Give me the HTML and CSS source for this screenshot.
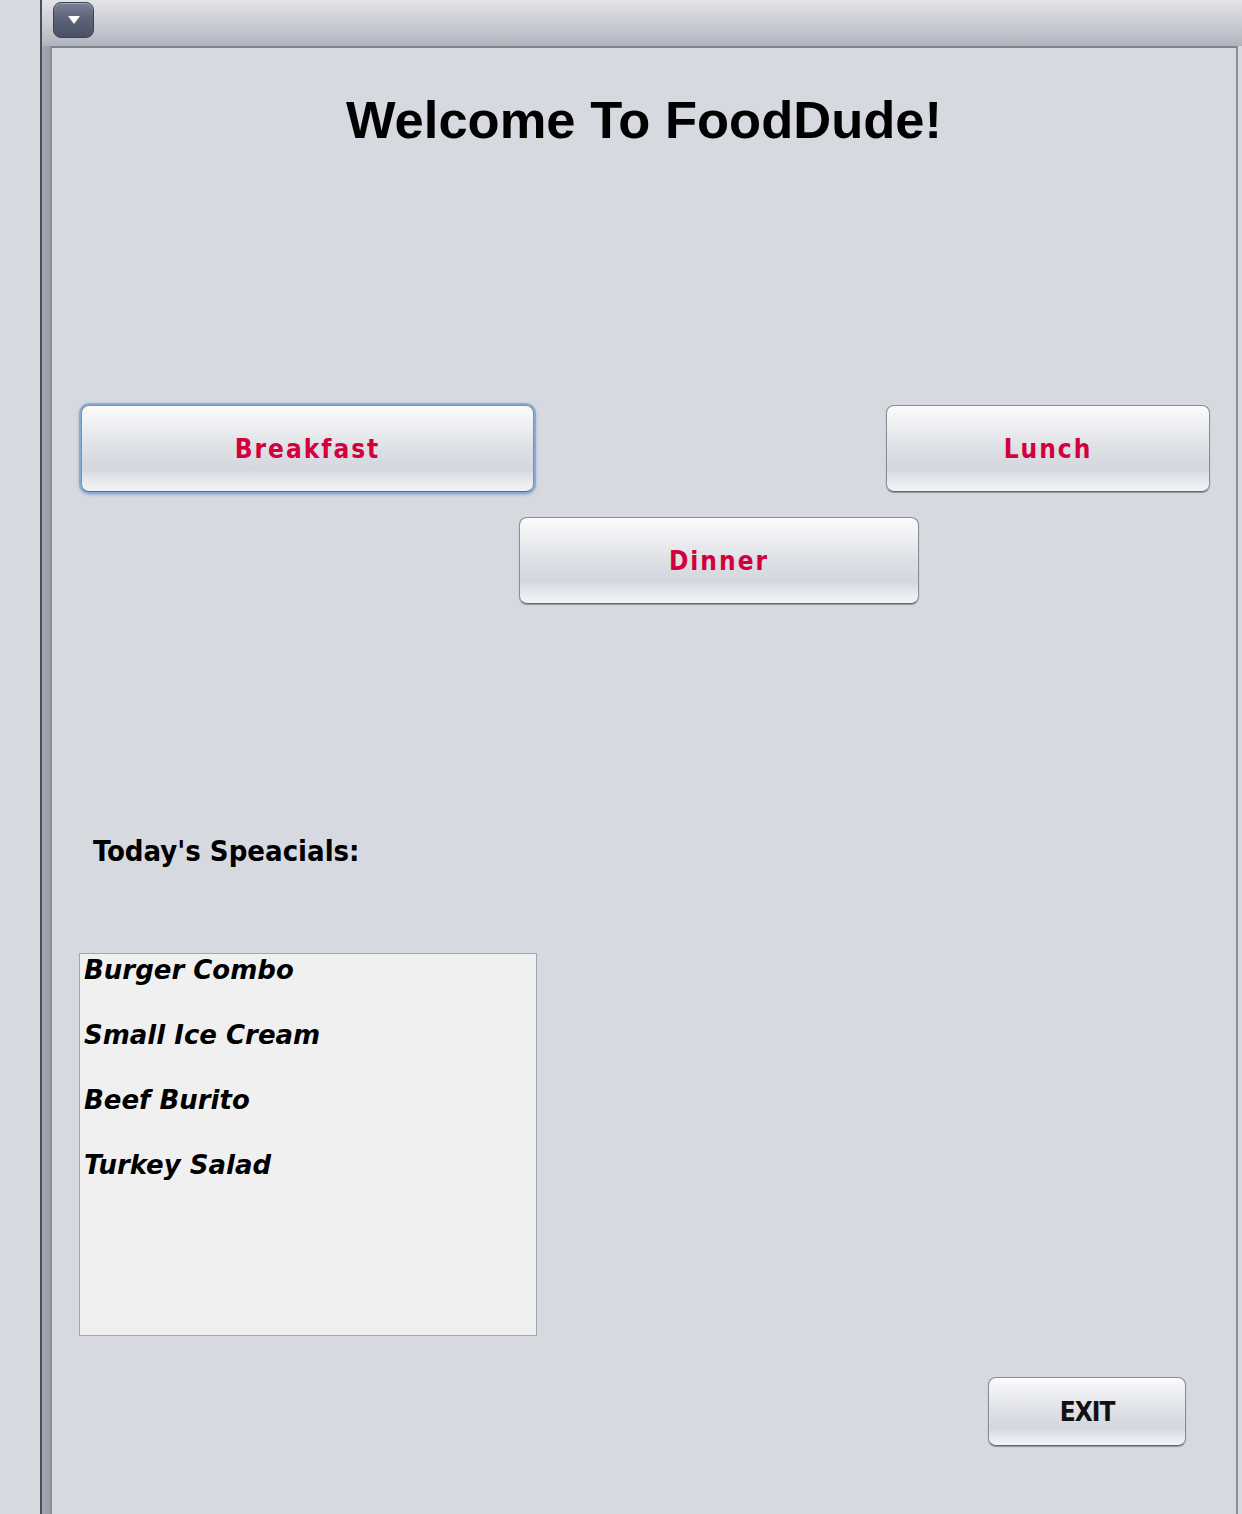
FILE: index.html
```html
<!DOCTYPE html>
<html lang="en">
<head>
<meta charset="utf-8">
<title>FoodDude</title>
<link rel="stylesheet" href="styles.css">
</head>
<body>
<div class="desktop">
  <div class="gutter"></div>
  <div class="window">
    <div class="titlebar">
      <button class="menu-btn" aria-label="Menu">
        <svg width="14" height="10" viewBox="0 0 14 10"><path d="M1 1 H13 L7 9 Z" fill="#ffffff"/></svg>
      </button>
    </div>
    <div class="frame">
      <div class="frame-edge"></div>
      <main class="panel">
        <h1 class="title">Welcome To FoodDude!</h1>
        <div class="row-top">
          <button class="meal breakfast">Breakfast</button>
          <button class="meal lunch">Lunch</button>
        </div>
        <div class="row-mid">
          <button class="meal dinner">Dinner</button>
        </div>
        <h2 class="specials-label">Today's Speacials:</h2>
        <ul class="specials">
          <li>Burger Combo</li>
          <li>Small Ice Cream</li>
          <li>Beef Burito</li>
          <li>Turkey Salad</li>
        </ul>
        <div class="row-exit">
          <button class="exit">EXIT</button>
        </div>
      </main>
    </div>
  </div>
</div>
</body>
</html>
```
FILE: styles.css
```css
html, body {
  margin: 0;
  padding: 0;
}
body {
  background: #d6d9df;
  width: 1242px;
  height: 1514px;
  overflow: hidden;
  font-family: "DejaVu Sans", sans-serif;
}
.desktop {
  display: flex;
  height: 1514px;
}
.gutter {
  width: 40px;
  flex: none;
}
.window {
  flex: 1;
  display: flex;
  flex-direction: column;
  border-left: 2px solid #4b4e56;
}
.titlebar {
  height: 46px;
  box-sizing: border-box;
  padding: 2px 0 0 11px;
  background: linear-gradient(#e3e4e8 0%, #d2d4da 35%, #bfc2ca 75%, #b0b3bd 100%);
}
.menu-btn {
  width: 41px;
  height: 36px;
  padding: 0;
  border: 1px solid #3d4253;
  border-radius: 8px;
  background: linear-gradient(#7a8095 0%, #5d6479 45%, #4b5166 100%);
  box-shadow: inset 0 1px 0 rgba(255,255,255,0.35);
  display: flex;
  align-items: center;
  justify-content: center;
}
.frame {
  flex: 1;
  display: flex;
}
.frame-edge {
  width: 8px;
  flex: none;
  background: linear-gradient(90deg, #a5a9b5, #989ca9);
}
.panel {
  width: 1184px;
  flex: none;
  border-left: 2px solid #8b8f9b;
  border-top: 2px solid #7d818d;
  border-right: 2px solid #8b8f9b;
  display: flex;
  flex-direction: column;
  align-items: flex-start;
}
.title {
  align-self: stretch;
  margin: 42px 0 0 0;
  text-align: center;
  font-family: "Liberation Sans", Arial, sans-serif;
  font-weight: 700;
  font-size: 52.5px;
  line-height: 60px;
  color: #000;
}
.row-top {
  align-self: stretch;
  display: flex;
  justify-content: space-between;
  margin-top: 255px;
  padding: 0 26px 0 29px;
}
.meal, .exit {
  padding: 0;
  border: 1px solid #8a8d95;
  border-bottom-color: #65686f;
  border-radius: 8px;
  background: linear-gradient(#fbfbfc 0%, #ebecef 28%, #dcdfe4 52%, #d4d7de 74%, #e9ebef 90%, #f3f4f7 100%);
  box-shadow: 0 1px 1px rgba(60, 63, 70, 0.45);
  font-family: "DejaVu Sans Condensed", "DejaVu Sans", sans-serif;
  font-weight: 700;
  font-size: 26px;
}
.meal {
  height: 87px;
  letter-spacing: 2px;
  color: #d2003c;
}
.breakfast {
  width: 453px;
  box-shadow: 0 0 0 2px #86abd6, 0 1px 3px 2px rgba(110, 150, 200, 0.5);
}
.lunch {
  width: 324px;
}
.row-mid {
  margin: 25px 0 0 467px;
}
.dinner {
  width: 400px;
}
.specials-label {
  margin: 230px 0 0 41px;
  font-family: "DejaVu Sans Condensed", "DejaVu Sans", sans-serif;
  font-weight: 700;
  font-size: 29px;
  line-height: 34px;
  color: #000;
}
.specials {
  list-style: none;
  margin: 85px 0 0 27px;
  padding: 1px 0 0 4px;
  width: 458px;
  height: 383px;
  box-sizing: border-box;
  background: #f0f0f0;
  border: 1px solid #a3a7b0;
}
.specials li {
  font-family: "DejaVu Sans", sans-serif;
  font-weight: 700;
  font-style: oblique;
  font-size: 26px;
  line-height: 30px;
  margin-bottom: 35px;
  color: #000;
}
.row-exit {
  margin: 41px 0 0 936px;
}
.exit {
  width: 198px;
  height: 69px;
  letter-spacing: -1px;
  color: #111;
}
```
